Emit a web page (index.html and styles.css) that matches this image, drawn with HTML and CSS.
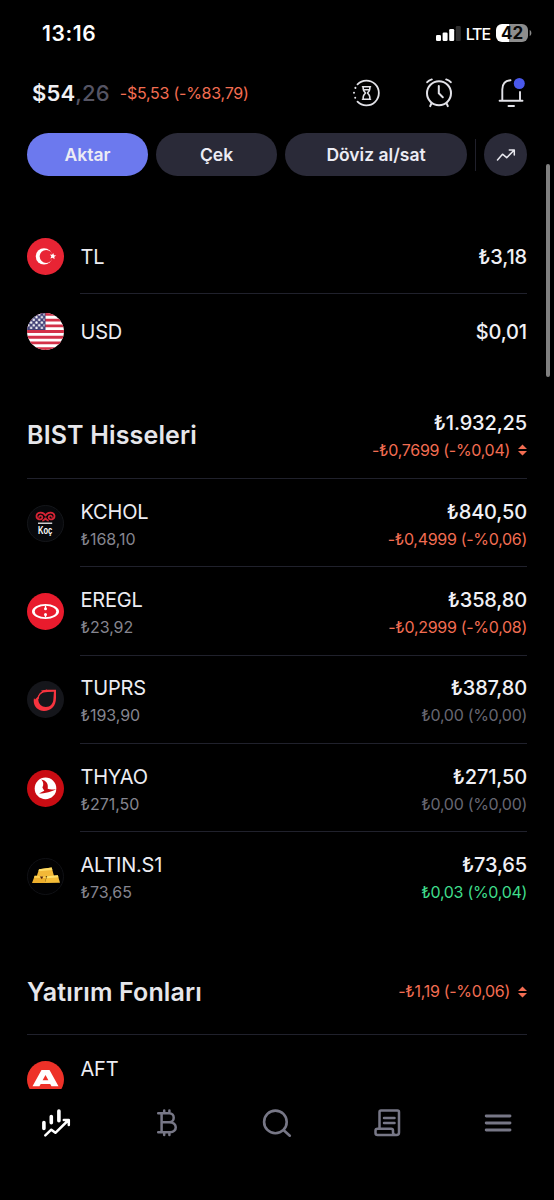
FILE: index.html
```html
<!DOCTYPE html>
<html lang="tr">
<head>
<meta charset="utf-8">
<title>Portföy</title>
<link rel="stylesheet" href="styles.css">
</head>
<body>
<div class="app">
  <div class="status">
    <span class="time">13:16</span>
    <div class="status-right">
      <svg class="signal" width="25" height="16" viewBox="0 0 25 16"><rect x="0" y="10" width="5" height="6" rx="1.3" fill="#fff"/><rect x="6.6" y="7.500" width="5" height="8.500" rx="1.3" fill="#fff"/><rect x="13.2" y="4" width="5" height="12" rx="1.3" fill="#fff"/><rect x="19.8" y="1" width="5" height="15" rx="1.3" fill="#2e2e2e"/></svg>
      <span class="lte">LTE</span>
      <span class="battery">42</span>
      <svg width="3" height="6" viewBox="0 0 3 6"><path d="M.7 0C2.900 1 2.900 5 .7 6Z" fill="#8a8a8a"/></svg>
    </div>
  </div>

  <header class="head">
    <span class="balance">$54<span class="cents">,26</span></span>
    <span class="change">-$5,53 (-%83,79)</span>
    <div class="head-icons">
      <svg width="28" height="30" viewBox="0 0 28 30" fill="none" stroke="#e2e2e8" stroke-width="1.800" stroke-linecap="round" stroke-linejoin="round"><path d="M5.500 6.400A12.400 12.400 0 1 1 5.500 23.600"/><path d="M3.400 9.800V9.900M2 14.700V14.800M3.200 19.700V19.800" stroke-width="2"/><path d="M10.500 8.700H18.500M10.500 21.300H18.500M11.200 8.700V11Q11.200 12.700 13.500 15Q11.200 17.300 11.200 19V21.300M17.800 8.700V11Q17.800 12.700 15.500 15Q17.800 17.300 17.800 19V21.300M12.500 11.800H16.500" stroke-width="1.600"/></svg>
      <svg width="28" height="30" viewBox="0 0 28 30" fill="none" stroke="#e2e2e8" stroke-width="2" stroke-linecap="round" stroke-linejoin="round"><circle cx="14" cy="15.300" r="12"/><path d="M13.800 8V15.300L17.800 19.200"/><path d="M2.200 4.200Q4 2.200 6.800 1.400M25.800 4.200Q24 2.200 21.200 1.400M6.200 25.800L5.200 28.200M21.800 25.800L22.800 28.200"/></svg>
      <svg width="28" height="30" viewBox="0 0 28 30" fill="none" stroke="#e2e2e8" stroke-width="1.900" stroke-linecap="round"><path d="M12.500 2.200Q4.300 2.800 4.300 11.500V22.200M22 14V22.200M1.600 22.700H24.500M10.500 28H16"/><circle cx="21.300" cy="5.500" r="5.500" fill="#4a58ea" stroke="none"/></svg>
    </div>
  </header>

  <nav class="actions">
    <div class="pill primary">Aktar</div>
    <div class="pill">Çek</div>
    <div class="pill wide">Döviz al/sat</div>
    <div class="bar"></div>
    <div class="round"><svg width="20" height="12" viewBox="0 0 20 12" fill="none" stroke="#e8e8ee" stroke-width="1.500" stroke-linecap="round" stroke-linejoin="round"><path d="M1.500 11L6.500 5.200L10.700 8.700L18 1.200M13.300 1H18.300V6"/></svg></div>
  </nav>

  <main class="list">
    <section>
      <div class="row cash">
        <svg class="logo" viewBox="0 0 37 37"><circle cx="18.500" cy="18.500" r="18.500" fill="#e82434"/><circle cx="17" cy="18.400" r="8.200" fill="#fff"/><circle cx="19.200" cy="18.400" r="6.500" fill="#e82434"/><path d="M26.2 14.900L27 17.200L29.200 17.600L27.300 18.800L27.500 21.200L25.700 19.700L23.400 20.500L24.300 18.300L22.900 16.500L25.100 16.800Z" fill="#fff"/></svg>
        <div class="cell"><span class="name">TL</span><span class="amount">₺3,18</span></div>
      </div>
      <div class="row cash">
        <svg class="logo" viewBox="0 0 37 37">
          <defs><clipPath id="disc"><circle cx="18.500" cy="18.500" r="18.500"/></clipPath>
          <pattern id="stars" width="5.400" height="5.400" patternUnits="userSpaceOnUse"><circle cx="1.400" cy="1.500" r="1.200" fill="#fff"/><circle cx="4.100" cy="4.200" r="1.200" fill="#fff"/></pattern></defs>
          <g clip-path="url(#disc)"><rect width="37" height="37" fill="#fff"/><path d="M0 1.400H37M0 7.100H37M0 12.800H37M0 18.500H37M0 24.200H37M0 29.900H37M0 35.600H37" stroke="#d33148" stroke-width="2.850"/><rect width="18.500" height="17" fill="#444378"/><rect width="17.500" height="16" fill="url(#stars)"/></g>
        </svg>
        <div class="cell"><span class="name">USD</span><span class="amount">$0,01</span></div>
      </div>
    </section>

    <section class="stocks">
      <div class="title-row">
        <h2 class="stock-title">BIST Hisseleri</h2>
        <div class="totals"><span class="amount">₺1.932,25</span>
          <span class="delta down">-₺0,7699 (-%0,04)<svg class="sort" width="9" height="12" viewBox="0 0 9 12"><path d="M4.500 .4L9 5H0ZM4.500 11.600L9 7H0Z" fill="#f26d52"/></svg></span></div>
      </div>
      <div class="row">
        <svg class="logo" viewBox="0 0 37 37"><circle cx="18.500" cy="18.500" r="18" fill="#07080b" stroke="#14161a"/><g fill="none" stroke="#d82435" stroke-width="1.700" stroke-linecap="round"><path d="M18.300 10.500C17 7 10.500 6.300 9.500 10.500C9 14.500 14.500 16 15.400 12.500C15.600 10.300 12.300 9.800 12.100 12"/><path d="M18.700 10.500C20 7 26.500 6.300 27.500 10.500C28 14.500 22.500 16 21.600 12.500C21.400 10.300 24.700 9.800 24.900 12"/><path d="M16 15.600Q18.400 14.500 18.500 12.500Q18.600 14.500 21 15.600"/></g><rect x="11" y="17.600" width="14.200" height="1.200" fill="#fff"/><text x="11" y="28.500" class="koc" textLength="14.300" lengthAdjust="spacingAndGlyphs">Koç</text></svg>
        <div class="cell"><div class="pair"><span class="name">KCHOL</span><span class="price">₺168,10</span></div><div class="pair end"><span class="amount">₺840,50</span><span class="delta down">-₺0,4999 (-%0,06)</span></div></div>
      </div>
      <div class="row">
        <svg class="logo" viewBox="0 0 37 37"><circle cx="18.500" cy="18.500" r="18.500" fill="#e91b2d"/><path fill-rule="evenodd" d="M5 18.500A13.500 7.400 0 1 0 32 18.500A13.500 7.400 0 1 0 5 18.500ZM7.700 18.500A10.800 5.700 0 1 1 29.300 18.500A10.800 5.700 0 1 1 7.700 18.500Z" fill="#fff"/><path d="M18.500 12.500V16.200M18.500 21V24.500" stroke="#fff" stroke-width="1.300"/><circle cx="18.500" cy="15.700" r="1.500" fill="#fff"/><circle cx="18.500" cy="21.500" r="1.500" fill="#fff"/></svg>
        <div class="cell"><div class="pair"><span class="name">EREGL</span><span class="price">₺23,92</span></div><div class="pair end"><span class="amount">₺358,80</span><span class="delta down">-₺0,2999 (-%0,08)</span></div></div>
      </div>
      <div class="row">
        <svg class="logo" viewBox="0 0 37 37"><circle cx="18.500" cy="18.500" r="18.500" fill="#15161b"/><path fill-rule="evenodd" fill="#f7343f" d="M29 8.700H20C12.500 8.700 6.700 13 6.700 19.800C6.700 26 11.500 30 17 30C24 30 29 25 29 17ZM26.900 10.800L20.500 11C14.500 11.200 11.300 14 11.300 18.500C11.300 23 14.800 26 18.800 26C23.500 26 26.200 22.500 26.400 18Z"/><path d="M11 9L15.500 10.500L11.500 15L8 18.500L5.500 15Z" fill="#15161b"/><path d="M11.300 18C10.500 14.500 14 10.200 20 9.200" fill="none" stroke="#f7343f" stroke-width="1.200"/></svg>
        <div class="cell"><div class="pair"><span class="name">TUPRS</span><span class="price">₺193,90</span></div><div class="pair end"><span class="amount">₺387,80</span><span class="delta">₺0,00 (%0,00)</span></div></div>
      </div>
      <div class="row">
        <svg class="logo" viewBox="0 0 37 37"><circle cx="18.500" cy="18.500" r="18.500" fill="#c90c13"/><circle cx="18.500" cy="18.400" r="10.800" fill="#fff"/><path d="M14.300 9.500C19 10.500 21.600 13.200 20.700 18.800C23 19.800 26 19.600 29 19.200C26 21.500 17.500 23.300 12 23.600L17.300 20.700C16.500 19.700 15.800 18.700 15.400 17.600C17 14.300 16.300 11.500 14.300 9.500Z" fill="#c90c13"/></svg>
        <div class="cell"><div class="pair"><span class="name">THYAO</span><span class="price">₺271,50</span></div><div class="pair end"><span class="amount">₺271,50</span><span class="delta">₺0,00 (%0,00)</span></div></div>
      </div>
      <div class="row">
        <svg class="logo" viewBox="0 0 37 37"><circle cx="18.500" cy="18.500" r="18" fill="#020203" stroke="#101115"/><path d="M9.800 18L12 11.200L24.700 9.600L27 18Z" fill="#f2b838"/><path d="M12 11.200L24.700 9.600L25.300 12L11.500 13.300Z" fill="#ffdc65"/><path d="M5 25L7.700 17.800L19.500 18.300L18 25Z" fill="#edaf2d"/><path d="M7.700 17.800L18.500 18.200L18.500 20L7 19.800Z" fill="#ffd353"/><path d="M17.800 25L20 18.200L30.800 17.300L33 24.700Z" fill="#f5bd38"/><path d="M20 18.200L30.800 17.300L31.500 19.300L19.500 20.200Z" fill="#ffe06b"/><path d="M12.700 18.400L16.300 18.600L14.900 21.200Z" fill="#55200e"/></svg>
        <div class="cell"><div class="pair"><span class="name">ALTIN.S1</span><span class="price">₺73,65</span></div><div class="pair end"><span class="amount">₺73,65</span><span class="delta up">₺0,03 (%0,04)</span></div></div>
      </div>
    </section>

    <section class="funds">
      <div class="title-row">
        <h2>Yatırım Fonları</h2>
        <span class="delta down">-₺1,19 (-%0,06)<svg class="sort" width="9" height="12" viewBox="0 0 9 12"><path d="M4.500 .4L9 5H0ZM4.500 11.600L9 7H0Z" fill="#f26d52"/></svg></span>
      </div>
      <div class="row">
        <svg class="logo" viewBox="0 0 37 37"><circle cx="18.500" cy="18.500" r="18.500" fill="#ee3128"/><path fill-rule="evenodd" d="M14.500 9H22.500L31.500 25.200H24.500L23.200 23H13.700L12.400 25.200H5.500ZM18.500 14L15.600 19.300H21.400Z" fill="#fff"/></svg>
        <div class="cell"><div class="pair"><span class="name">AFT</span><span class="price"></span></div></div>
      </div>
    </section>
  </main>

  <nav class="tabs">
    <svg width="30" height="30" viewBox="0 0 30 30" fill="none" stroke="#fff" stroke-width="3.600" stroke-linecap="round" stroke-linejoin="round"><path d="M2.900 14.500V20.500M10.300 8.500V14.800M17.900 3V12.800"/><path d="M4.300 27.400L10.300 21.700L14.400 24.800L27 12.500M22.800 12H27.800V17" stroke-width="2.500"/></svg>
    <svg width="30" height="30" viewBox="0 0 30 30" fill="none" stroke="#777786" stroke-width="2.500" stroke-linecap="round" stroke-linejoin="round"><path d="M6.200 5.200H17.200C23.200 5.200 23.200 14.200 17.200 14.200H9.500M17.200 14.200C25.800 14.200 25.800 24.200 18 24.200H6.200M9.600 5.200V24.200M12.200 2.600V5M17.400 2.600V5M12.200 24.400V27M17.400 24.400V27"/></svg>
    <svg width="30" height="30" viewBox="0 0 30 30" fill="none" stroke="#777786" stroke-width="2.600" stroke-linecap="round"><circle cx="13.400" cy="13.900" r="11.300"/><path d="M22 22.500L27.800 27.700"/></svg>
    <svg width="30" height="30" viewBox="0 0 30 30" fill="none" stroke="#777786" stroke-width="2.500" stroke-linejoin="round" stroke-linecap="round"><path d="M6.500 19.500V4Q6.500 2.600 8 2.600H24.500Q26 2.600 26 4V24.500Q26 27 23.500 27H4.500Q2.500 27 2.500 25V22.500Q2.500 20.700 4.500 20.700H18Q20 20.700 20 22.500V24.500Q20 27 23 27M11 10H21.500M11 15H21.500"/></svg>
    <svg width="30" height="30" viewBox="0 0 30 30" fill="none" stroke="#777786" stroke-width="2.900" stroke-linecap="round"><path d="M3.200 8H27M3.200 15H27M3.200 22H27"/></svg>
  </nav>
  <div class="scrollbar"></div>
</div>
</body>
</html>
```

FILE: styles.css
```css
* { box-sizing: border-box; }
body { margin: 0; background: #000; }
.app {
  position: relative;
  display: flex;
  flex-direction: column;
  width: 554px;
  height: 1200px;
  overflow: hidden;
  background: #000;
  color: #ececf2;
  font-family: Inter, "Liberation Sans", sans-serif;
}
svg { display: block; flex: none; }
.status { flex: none; display: flex; align-items: center; justify-content: space-between; height: 66px; padding: 0 22px 0 42px; }
.time { font-size: 21px; font-weight: 600; letter-spacing: .6px; color: #fff; }
.status-right { display: flex; align-items: center; color: #fff; }
.lte { margin: 1px 6px 0 5px; font-size: 16px; font-weight: 500; letter-spacing: -1.1px; }
.battery { width: 32px; height: 18px; margin-right: 1px; border-radius: 6px; background: linear-gradient(90deg, #fff 42%, #8d8d8d 42%); color: #080808; font-size: 17px; font-weight: 700; line-height: 18px; text-align: center; }
.head { flex: none; display: flex; align-items: center; height: 54px; padding: 0 28px 0 32px; }
.balance { font-size: 22px; font-weight: 600; letter-spacing: .15px; color: #f0f0f4; }
.cents { color: #555463; font-weight: 500; }
.change { margin-left: 10px; font-size: 16px; letter-spacing: -.25px; color: #f26d52; }
.head-icons { display: flex; gap: 45px; margin-left: auto; }
.actions { flex: none; display: flex; align-items: center; height: 70px; padding: 0 27px 1px; }
.pill { width: 121px; height: 43px; margin-right: 8px; border-radius: 22px; background: #2a2a38; color: #ececf4; font-size: 17.500px; font-weight: 600; line-height: 43px; text-align: center; }
.primary { background: #6c79ee; }
.wide { width: 182px; }
.bar { width: 1px; height: 32px; margin-right: 8px; background: #20202b; }
.round { display: flex; align-items: center; justify-content: center; width: 43px; height: 43px; border-radius: 50%; background: #2a2a38; }
.list { flex: none; height: 899px; padding: 29px 27px 0; overflow: hidden; }
.row { display: flex; align-items: center; gap: 16px; height: 88.300px; }
.cash { height: 75px; }
.logo { width: 37px; height: 37px; }
.cell { display: flex; flex: 1; align-items: center; justify-content: space-between; height: 100%; border-bottom: 1px solid #20212c; }
.row:last-child .cell { border-bottom: 0; }
.pair { display: flex; flex-direction: column; padding-top: 5px; }
.end { align-items: flex-end; }
.name { padding-left: .5px; font-size: 20px; line-height: 28px; letter-spacing: -.2px; }
.amount { font-size: 20px; font-weight: 450; line-height: 28px; letter-spacing: -.15px; color: #f0f0f5; }
.cash .name, .cash .amount { padding-top: 1px; }
.price { min-height: 27px; padding-left: .5px; font-size: 16px; line-height: 27px; letter-spacing: -.05px; color: #85858f; }
.delta { display: flex; align-items: center; font-size: 16px; line-height: 27px; letter-spacing: -.3px; color: #676772; }
.down { color: #f26d52; }
.up { color: #3fdc8b; }
.sort { margin-left: 8px; }
.title-row { display: flex; align-items: center; justify-content: space-between; height: 86px; border-bottom: 1px solid #20212c; }
h2 { margin: 0; font-size: 25px; font-weight: 600; line-height: 30px; letter-spacing: .15px; color: #e6e6ea; }
.stock-title { padding-bottom: 2px; }
.stocks { padding-top: 24px; }
.totals { display: flex; flex-direction: column; align-items: flex-end; padding-top: 1px; }
.funds { padding-top: 29px; }
.koc { font-family: "Liberation Sans", sans-serif; font-size: 11.500px; font-weight: 700; fill: #fff; }
.tabs { flex: none; display: flex; justify-content: space-between; height: 111px; padding: 19px 41px 0; background: #000; }
.scrollbar { position: absolute; right: 4px; top: 164px; width: 4px; height: 213px; border-radius: 2px; background: #808080; }
```
